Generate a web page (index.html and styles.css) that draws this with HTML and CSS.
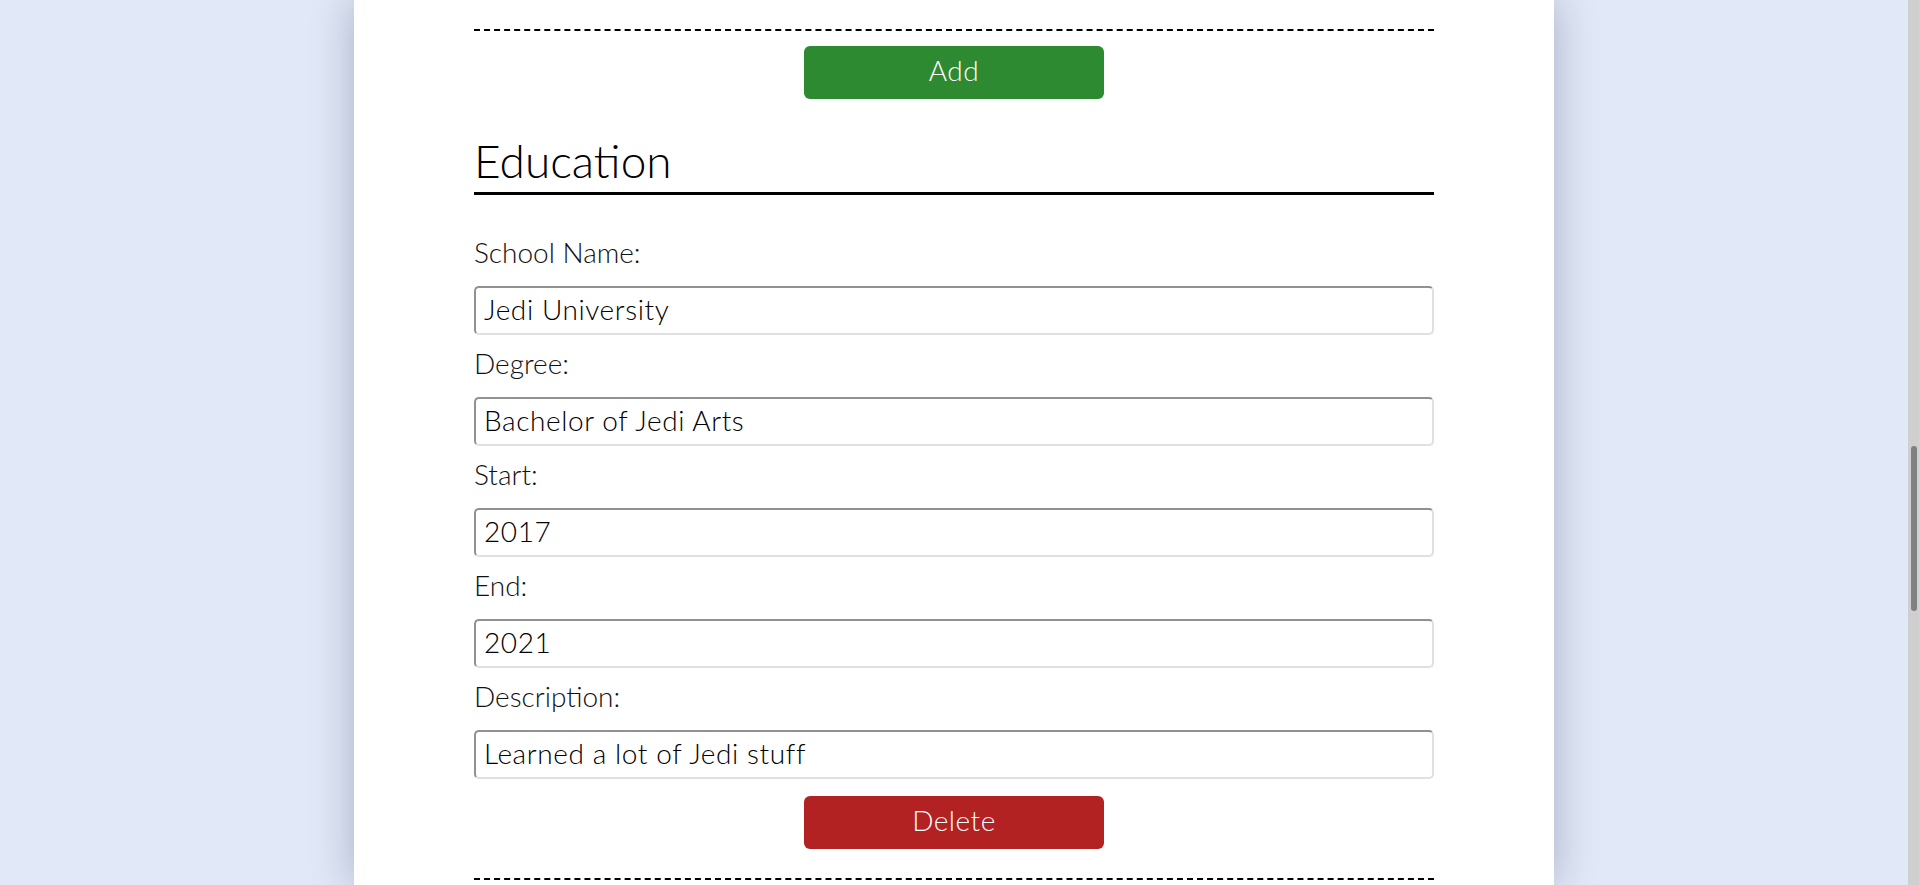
FILE: index.html
```html
<!DOCTYPE html>
<html lang="en">
<head>
<meta charset="utf-8">
<title>CV Builder - Education</title>
<link rel="stylesheet" href="styles.css">
</head>
<body>
  <div class="viewport">
    <main class="panel">
      <div class="content">
        <div class="divider"></div>
        <div class="actions">
          <button class="btn btn-add" type="button">Add</button>
        </div>
        <section class="section">
          <h2 class="section-title">Education</h2>
          <form class="fields">
            <div class="field">
              <label class="field-label" for="school">School Name:</label>
              <input class="field-input" id="school" type="text" value="Jedi University">
            </div>
            <div class="field">
              <label class="field-label" for="degree">Degree:</label>
              <input class="field-input" id="degree" type="text" value="Bachelor of Jedi Arts">
            </div>
            <div class="field">
              <label class="field-label" for="start">Start:</label>
              <input class="field-input" id="start" type="text" value="2017">
            </div>
            <div class="field">
              <label class="field-label" for="end">End:</label>
              <input class="field-input" id="end" type="text" value="2021">
            </div>
            <div class="field">
              <label class="field-label" for="desc">Description:</label>
              <input class="field-input" id="desc" type="text" value="Learned a lot of Jedi stuff">
            </div>
          </form>
          <div class="actions actions-delete">
            <button class="btn btn-delete" type="button">Delete</button>
          </div>
          <div class="divider divider-bottom"></div>
        </section>
      </div>
    </main>
  </div>
  <div class="scrollbar">
    <div class="scrollbar-thumb"></div>
  </div>
</body>
</html>
```

FILE: styles.css
```css
* {
  box-sizing: border-box;
}

html,
body {
  height: 100%;
}

body {
  margin: 0;
  display: flex;
  overflow: hidden;
  background: #e1e8f7;
  font-family: "Lato", "Liberation Sans", sans-serif;
  font-weight: 300;
  color: #000;
}

.viewport {
  flex: 1;
  min-width: 0;
  height: 100%;
  overflow: hidden;
}

.panel {
  width: 1200px;
  min-height: 100%;
  margin: 0 auto;
  background: #ffffff;
  box-shadow: 0 0 40px rgba(20, 30, 70, 0.28);
}

.content {
  width: 960px;
  margin: 0 auto;
  padding-top: 29px;
}

.divider {
  border-top: 2px dashed #000;
}

.actions {
  display: flex;
  justify-content: center;
  margin-top: 15px;
}

.btn {
  width: 300px;
  height: 53px;
  padding: 0 0 6px;
  border: none;
  border-radius: 6px;
  font-family: inherit;
  font-size: 28px;
  font-weight: 300;
  letter-spacing: 0.5px;
  color: #ffffff;
  display: flex;
  align-items: center;
  justify-content: center;
  cursor: pointer;
}

.btn-add {
  background: #2d8a30;
}

.btn-delete {
  background: #b22222;
}

.section-title {
  margin: 34px 0 0;
  font-size: 46px;
  font-weight: 300;
  line-height: 56px;
  padding-bottom: 3px;
  border-bottom: 3px solid #000;
  color: #000;
}

.fields {
  display: flex;
  flex-direction: column;
  gap: 11px;
  margin-top: 40px;
}

.field {
  display: flex;
  flex-direction: column;
  gap: 17px;
}

.field-label {
  font-size: 28px;
  line-height: 34px;
  color: #111;
}

.field-input {
  width: 100%;
  height: 49px;
  padding: 0 8px 3px;
  border: 2px solid;
  border-color: #919191 #e0e0e0 #e0e0e0 #919191;
  border-radius: 5px;
  font-family: inherit;
  font-size: 28px;
  font-weight: 300;
  letter-spacing: 0.6px;
  color: #000;
  background: #fff;
  outline: none;
}

.actions-delete {
  margin-top: 17px;
}

.divider-bottom {
  margin-top: 29px;
}

.scrollbar {
  flex: none;
  width: 11px;
  height: 100%;
  background: #cfcfcf;
  padding: 446px 2px 0 3px;
}

.scrollbar-thumb {
  width: 6px;
  height: 165px;
  border-radius: 3px;
  background: #7f8282;
}
```
